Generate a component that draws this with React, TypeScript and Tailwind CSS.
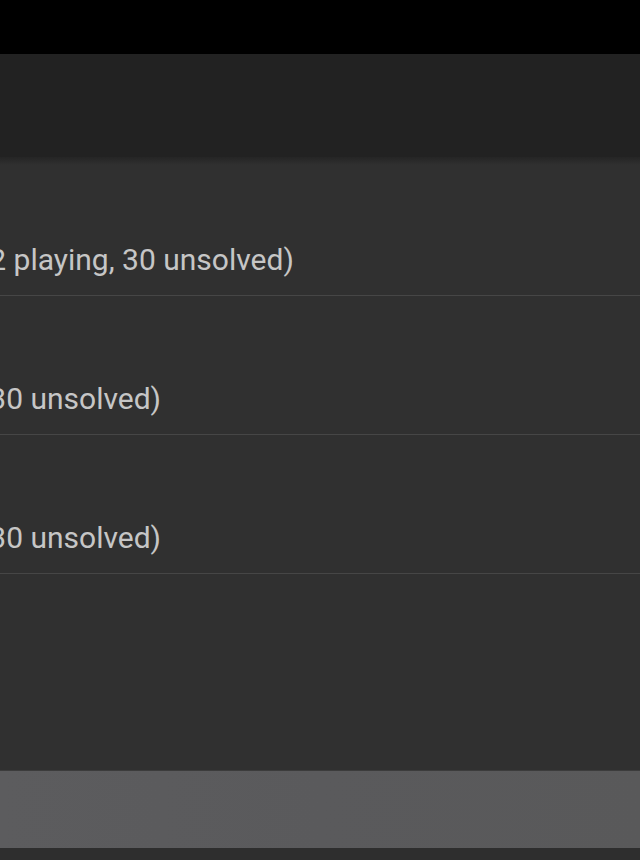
const rows = [
  { id: 1, label: '(2 playing, 30 unsolved)' },
  { id: 2, label: '(30 unsolved)' },
  { id: 3, label: '(30 unsolved)' },
];

const App = () => {
  return (
    <div
      className="w-[640px] h-[860px] flex flex-col bg-[#303030] overflow-hidden"
      style={{ fontFamily: 'Roboto, "Noto Sans", sans-serif' }}
    >
      <div className="h-[54px] bg-black shrink-0"></div>
      <div className="h-[103px] bg-[#222222] shrink-0"></div>
      <div className="h-[8px] -mb-[8px] bg-gradient-to-b from-[#252525] to-[#303030] relative shrink-0"></div>

      <div className="flex flex-col">
        {rows.map((row) => (
          <div key={row.id} className="h-[139px] border-b border-[#464646] pt-[86px] overflow-hidden">
            <div className="-ml-[21px] text-[30px] leading-[34px] text-[#c6c6c6] whitespace-nowrap">
              {row.label}
            </div>
          </div>
        ))}
      </div>

      <div className="flex-1"></div>

      <div className="h-[78px] shrink-0 border-t border-[#3c3c3c] bg-gradient-to-r from-[#5c5c5e] via-[#5a5a5c] to-[#59595a]"></div>
      <div className="h-[12px] shrink-0 bg-[#2e2e2e]"></div>
    </div>
  );
};

export default App;
